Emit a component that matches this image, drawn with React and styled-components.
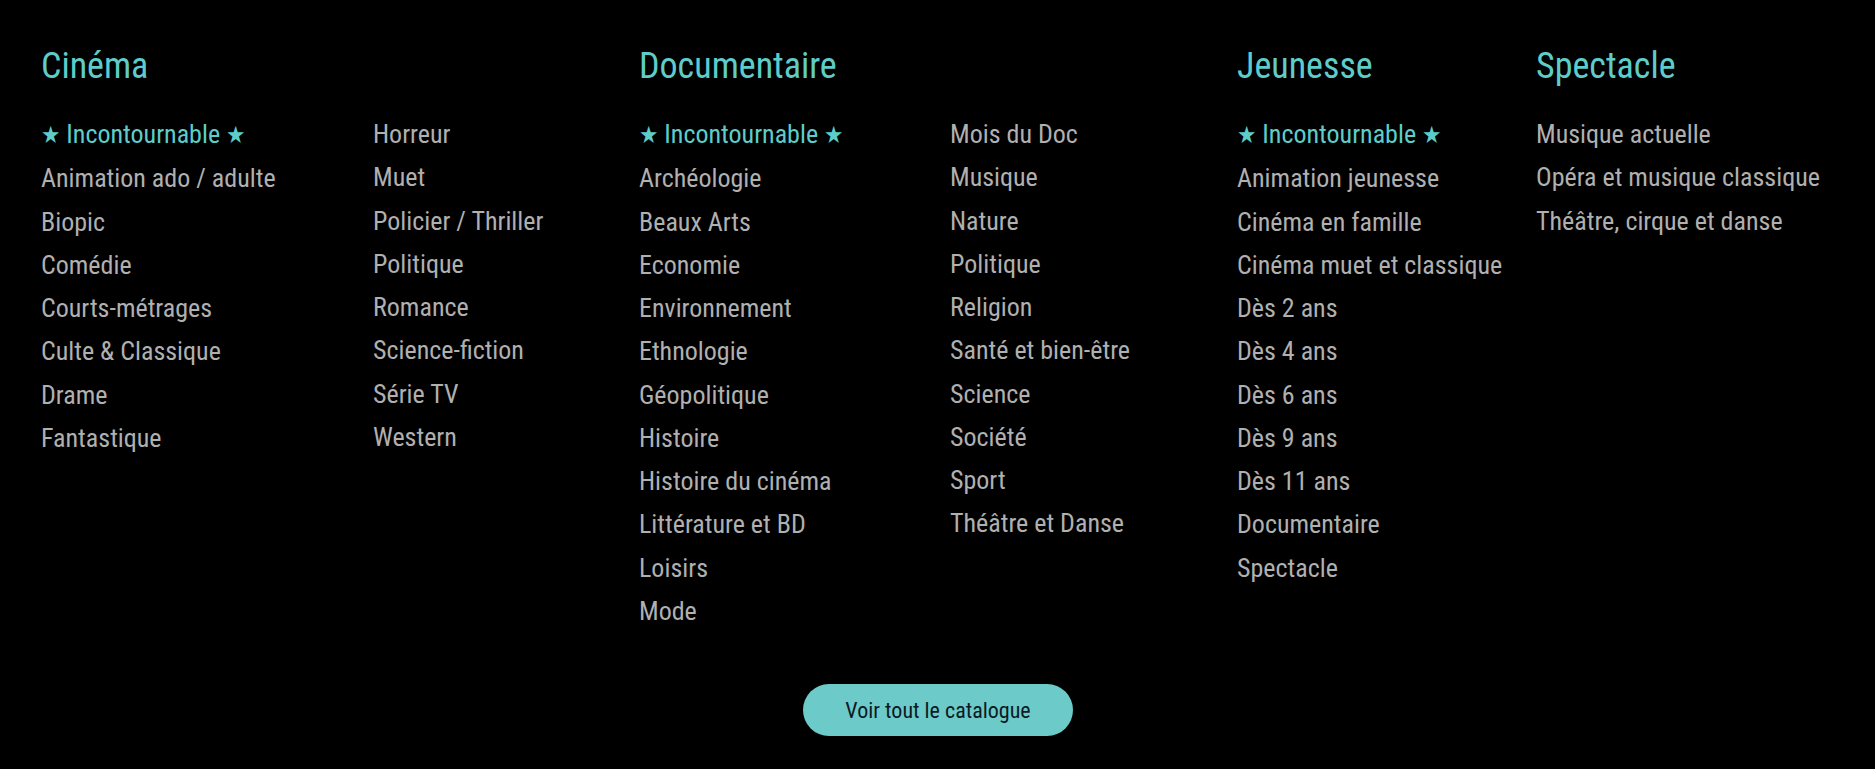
import React from "react";
import styled, { createGlobalStyle } from "styled-components";

const GlobalStyle = createGlobalStyle`
  html, body { margin: 0; padding: 0; background: #000; }
  body { font-family: Roboto, "Open Sans", "DejaVu Sans", sans-serif; font-stretch: condensed; }
`;

const Page = styled.div`
  background: #000;
  padding: 46px 40px 34px 41px;
  min-height: 769px;
  box-sizing: border-box;
`;

const Grid = styled.div`
  display: grid;
  grid-template-columns: repeat(6, minmax(0, 1fr));
  align-items: start;
`;

const Section = styled.section`
  grid-column: span ${(p) => p.span};
  display: flex;
  flex-direction: column;
  min-width: 0;
`;

const Heading = styled.h2`
  margin: 0 0 27px;
  font-size: 36px;
  line-height: 40px;
  font-weight: 400;
  color: #5ecdc9;
`;

const Lists = styled.div`
  display: flex;
`;

const List = styled.ul`
  list-style: none;
  margin: 0;
  padding: 0;
  width: ${(p) => (p.w ? `${p.w}px` : "auto")};
  flex: ${(p) => (p.w ? "none" : "1")};
`;

const Item = styled.li`
  font-size: 26px;
  line-height: 43.25px;
  white-space: nowrap;
  color: ${(p) => (p.accent ? "#5ecdc9" : "#b0b0b0")};
`;

const Star = styled.span`
  font-family: "DejaVu Sans", sans-serif;
  font-size: 24px;
`;

const Footer = styled.div`
  display: flex;
  justify-content: center;
  margin-top: 51px;
`;

const Button = styled.a`
  display: flex;
  align-items: center;
  justify-content: center;
  width: 270px;
  height: 52px;
  border-radius: 26px;
  background: #6ccac8;
  color: #0c1a26;
  font-size: 22px;
  text-decoration: none;
  cursor: pointer;
`;

const STAR = "★ Incontournable ★";

const sections = [
  {
    title: "Cinéma",
    span: 2,
    split: 332,
    cols: [
      [STAR, "Animation ado / adulte", "Biopic", "Comédie", "Courts-métrages", "Culte & Classique", "Drame", "Fantastique"],
      ["Horreur", "Muet", "Policier / Thriller", "Politique", "Romance", "Science-fiction", "Série TV", "Western"],
    ],
  },
  {
    title: "Documentaire",
    span: 2,
    split: 311,
    cols: [
      [STAR, "Archéologie", "Beaux Arts", "Economie", "Environnement", "Ethnologie", "Géopolitique", "Histoire", "Histoire du cinéma", "Littérature et BD", "Loisirs", "Mode"],
      ["Mois du Doc", "Musique", "Nature", "Politique", "Religion", "Santé et bien-être", "Science", "Société", "Sport", "Théâtre et Danse"],
    ],
  },
  {
    title: "Jeunesse",
    span: 1,
    cols: [
      [STAR, "Animation jeunesse", "Cinéma en famille", "Cinéma muet et classique", "Dès 2 ans", "Dès 4 ans", "Dès 6 ans", "Dès 9 ans", "Dès 11 ans", "Documentaire", "Spectacle"],
    ],
  },
  {
    title: "Spectacle",
    span: 1,
    cols: [["Musique actuelle", "Opéra et musique classique", "Théâtre, cirque et danse"]],
  },
];

function Entry({ label }) {
  if (label === STAR) {
    return (
      <Item accent>
        <Star>★</Star> Incontournable <Star>★</Star>
      </Item>
    );
  }
  return <Item>{label}</Item>;
}

export default function App() {
  return (
    <>
      <GlobalStyle />
      <Page>
        <Grid>
          {sections.map((s) => (
            <Section key={s.title} span={s.span}>
              <Heading>{s.title}</Heading>
              <Lists>
                {s.cols.map((col, i) => (
                  <List key={i} w={i === 0 && s.cols.length > 1 ? s.split : undefined}>
                    {col.map((label) => (
                      <Entry key={label} label={label} />
                    ))}
                  </List>
                ))}
              </Lists>
            </Section>
          ))}
        </Grid>
        <Footer>
          <Button>Voir tout le catalogue</Button>
        </Footer>
      </Page>
    </>
  );
}
